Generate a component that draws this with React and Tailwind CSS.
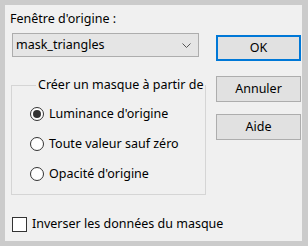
import React from "react";

function Radio({ checked, label }) {
  return (
    <div className="flex items-center h-[20px]">
      <span className="w-[14px] h-[14px] rounded-full border border-[#333333] bg-white flex items-center justify-center shrink-0">
        {checked && <span className="w-[8px] h-[8px] rounded-full bg-[#333333]" />}
      </span>
      <span className="ml-[5px]">{label}</span>
    </div>
  );
}

function Button({ children, primary, className = "" }) {
  return (
    <div
      className={
        "w-[85px] h-[26px] flex items-center justify-center bg-[#e1e1e1] " +
        (primary ? "border-2 border-[#0078d7] " : "border border-[#adadad] ") +
        className
      }
    >
      {children}
    </div>
  );
}

export default function App() {
  return (
    <div
      className="w-[308px] h-[246px] bg-[#cbcbcb] pt-[5px] pl-[5px] pr-[6px] pb-[5px] text-[12.5px] leading-[20px] text-black"
      style={{ fontFamily: '"Segoe UI", "Noto Sans", sans-serif' }}
    >
      <div className="w-full h-full bg-[#f0f0f0] flex">
        {/* left column */}
        <div className="w-[195px] flex flex-col">
          <div className="pt-[4px] pl-[5px]">Fenêtre d'origine :</div>
          <div className="mt-[4px] ml-[7px] w-[187px] h-[24px] bg-[#e5e5e5] border border-[#adadad] flex items-center pl-[3px] pr-[7px]">
            <span className="flex-1">mask_triangles</span>
            <svg width="9" height="5" viewBox="0 0 9 5" className="mt-[1px]">
              <polyline points="0.5,0.5 4.5,4.5 8.5,0.5" fill="none" stroke="#555" strokeWidth="1" />
            </svg>
          </div>

          <fieldset className="mt-[18px] ml-[6px] w-[186px] border border-[#d5d5d5] pl-[18px] pt-[9px] pb-[10px] flex flex-col gap-[10px]">
            <legend className="ml-[6px] px-[2px] whitespace-nowrap">Créer un masque à partir de</legend>
            <Radio checked label="Luminance d'origine" />
            <Radio label="Toute valeur sauf zéro" />
            <Radio label="Opacité d'origine" />
          </fieldset>

          <div className="mt-[19px] ml-[7px] flex items-center h-[20px] whitespace-nowrap">
            <span className="w-[15px] h-[15px] border border-[#333333] bg-white shrink-0" />
            <span className="ml-[5px]">Inverser les données du masque</span>
          </div>
        </div>

        {/* right column */}
        <div className="ml-auto mr-[1px] pt-[30px] flex flex-col">
          <Button primary>OK</Button>
          <Button className="mt-[15px]">Annuler</Button>
          <Button className="mt-[12px]">Aide</Button>
        </div>
      </div>
    </div>
  );
}
